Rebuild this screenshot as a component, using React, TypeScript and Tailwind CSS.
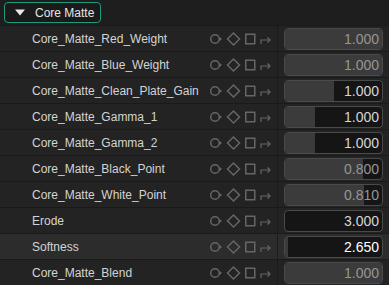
import { useState } from "react";

interface Param {
  name: string;
  value: string;
  fill: number; // fraction of the field that is light (slider position)
  changed?: boolean;
  bright?: boolean;
}

const params: Param[] = [
  { name: "Core_Matte_Red_Weight", value: "1.000", fill: 1 },
  { name: "Core_Matte_Blue_Weight", value: "1.000", fill: 1 },
  { name: "Core_Matte_Clean_Plate_Gain", value: "1.000", fill: 0.5, changed: true },
  { name: "Core_Matte_Gamma_1", value: "1.000", fill: 0.31, changed: true },
  { name: "Core_Matte_Gamma_2", value: "1.000", fill: 0.31, changed: true },
  { name: "Core_Matte_Black_Point", value: "0.800", fill: 0.8 },
  { name: "Core_Matte_White_Point", value: "0.810", fill: 0.81 },
  { name: "Erode", value: "3.000", fill: 0, changed: true },
  { name: "Softness", value: "2.650", fill: 0.03, changed: true, bright: true },
  { name: "Core_Matte_Blend", value: "1.000", fill: 1 },
];

function KeyIcons() {
  return (
    <svg width="64" height="16" viewBox="0 0 64 16" className="shrink-0">
      <g fill="none" stroke="#666" strokeWidth="1.5">
        <circle cx="6" cy="8" r="4.3" />
        <path d="M24.5 2 30.5 8 24.5 14 18.5 8Z" />
        <rect x="36.75" y="3.25" width="9" height="9.5" />
        <path d="M52 13V9h9" strokeWidth="1.2" />
        <path d="M58.5 6.5 61 9l-2.5 2.5" strokeWidth="1.2" />
      </g>
      <path d="M10.5 6 13 8l-2.5 2Z" fill="#666" />
    </svg>
  );
}

function Row({ p }: { p: Param }) {
  const [hover] = useState(p.name === "Softness");
  return (
    <div
      className={`flex h-[26px] items-center border-b border-[#1a1a1a] ${
        hover ? "bg-[#2c2c2c]" : "bg-[#232323]"
      }`}
    >
      <div className="min-w-0 flex-1 pl-8 text-[12px] text-[#d4d4d4] whitespace-nowrap">{p.name}</div>
      <div className="flex h-full w-[69px] items-center border-r border-[#1b1b1b]">
        <KeyIcons />
      </div>
      <div className="flex h-full items-center pl-[6px] pr-[6px]">
        <div className="relative h-[22px] w-[99px] overflow-hidden rounded-[4px] border border-[#4a4a4a] bg-[#151515]">
          <div
            className="absolute inset-y-0 left-0 bg-[#3b3b3b]"
            style={{ width: `${p.fill * 100}%` }}
          />
          <div
            className={`relative pr-[3px] text-right text-[14px] leading-[20px] ${
              p.bright ? "text-white" : p.changed ? "text-[#d6d6d6]" : "text-[#959595]"
            }`}
          >
            {p.value}
          </div>
        </div>
      </div>
    </div>
  );
}

export default function App() {
  return (
    <div
      className="h-[285px] w-[389px] overflow-hidden bg-[#1e1e1e]"
      style={{ fontFamily: "'Liberation Sans', Arial, sans-serif" }}
    >
      <div className="flex h-[26px] items-center border-b border-[#1a1a1a] px-1">
        <div className="flex h-[21px] w-[97px] items-center gap-[10px] rounded-[4px] border border-[#1f9a7c] bg-[#1a1a1a] pl-[10px]">
          <svg width="10" height="7" viewBox="0 0 10 7">
            <path d="M0 0.5h10L5 6.5Z" fill="#e8e8e8" />
          </svg>
          <span className="text-[12px] text-[#e6e6e6]">Core Matte</span>
        </div>
      </div>
      {params.map((p) => (
        <Row key={p.name} p={p} />
      ))}
    </div>
  );
}
